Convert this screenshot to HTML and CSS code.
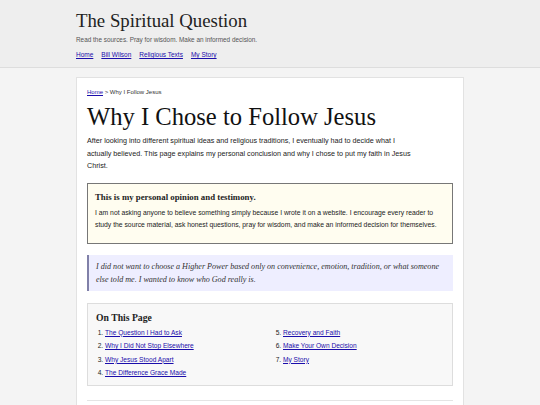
FILE: index.html
```html
<!DOCTYPE html>
<html lang="en">
<head>
    <meta charset="UTF-8">
    <meta name="viewport" content="width=device-width, initial-scale=1.0">
    <title>Why I Chose to Follow Jesus - The Spiritual Question</title>
    <link rel="stylesheet" href="styles.css">
</head>
<body>
    <header class="site-header">
        <div class="wrap">
            <div class="site-title">The Spiritual Question</div>
            <p class="tagline">Read the sources. Pray for wisdom. Make an informed decision.</p>
            <nav class="site-nav">
                <a href="#">Home</a>
                <a href="#">Bill Wilson</a>
                <a href="#">Religious Texts</a>
                <a href="#">My Story</a>
            </nav>
        </div>
    </header>

    <main class="wrap">
        <article class="card">
            <div class="breadcrumb"><a href="#">Home</a> &gt; Why I Follow Jesus</div>

            <h1>Why I Chose to Follow Jesus</h1>

            <p class="intro">After looking into different spiritual ideas and religious traditions, I eventually had to decide what I actually believed. This page explains my personal conclusion and why I chose to put my faith in Jesus Christ.</p>

            <div class="notice">
                <h2>This is my personal opinion and testimony.</h2>
                <p>I am not asking anyone to believe something simply because I wrote it on a website. I encourage every reader to study the source material, ask honest questions, pray for wisdom, and make an informed decision for themselves.</p>
            </div>

            <blockquote class="quote">
                I did not want to choose a Higher Power based only on convenience, emotion, tradition, or what someone else told me. I wanted to know who God really is.
            </blockquote>

            <div class="toc">
                <h2>On This Page</h2>
                <ol>
                    <li><a href="#">The Question I Had to Ask</a></li>
                    <li><a href="#">Why I Did Not Stop Elsewhere</a></li>
                    <li><a href="#">Why Jesus Stood Apart</a></li>
                    <li><a href="#">The Difference Grace Made</a></li>
                    <li><a href="#">Recovery and Faith</a></li>
                    <li><a href="#">Make Your Own Decision</a></li>
                    <li><a href="#">My Story</a></li>
                </ol>
            </div>

            <hr class="divider">
        </article>
    </main>
</body>
</html>
```

FILE: styles.css
```css
* {
    margin: 0;
    padding: 0;
    box-sizing: border-box;
}

body {
    background: #f4f4f4;
    color: #222;
    font-family: 'Liberation Sans', Arial, sans-serif;
    font-size: 7px;
}

a {
    color: #1a0dab;
}

.wrap {
    width: 388px;
    margin-left: 76px;
}

.site-header {
    background: #eeeeee;
    border-bottom: 1px solid #dddddd;
    height: 68px;
    padding-top: 9px;
}

.site-title {
    font-family: 'Liberation Serif', Georgia, serif;
    font-size: 18.8px;
    color: #222;
    line-height: 24px;
}

.tagline {
    color: #555;
    font-size: 6.4px;
    margin-top: 3px;
}

.site-nav {
    display: flex;
    gap: 8px;
    margin-top: 8px;
    font-size: 6.5px;
}

main.wrap {
    margin-top: 9px;
}

.card {
    background: #fff;
    border: 1px solid #e2e2e2;
    padding: 10px 10px 0;
    min-height: 340px;
}

.breadcrumb {
    font-size: 6px;
    color: #333;
    margin-top: 1px;
}

h1 {
    font-family: 'Liberation Serif', Georgia, serif;
    font-weight: normal;
    font-size: 24.6px;
    line-height: 30px;
    margin-top: 7px;
    color: #111;
}

.intro {
    font-size: 7.2px;
    line-height: 12.5px;
    max-width: 334px;
    margin-top: 3px;
}

.notice {
    background: #fffdf0;
    border: 1px solid #777;
    padding: 8px 8px 12px 7px;
    margin-top: 10px;
}

.notice h2 {
    font-family: 'Liberation Serif', Georgia, serif;
    font-size: 8.8px;
    font-weight: bold;
}

.notice p {
    font-size: 6.8px;
    line-height: 12px;
    margin-top: 5px;
}

.quote {
    background: #eeeeff;
    border-left: 2px solid #8080a8;
    padding: 5px 7px 5px 7px;
    margin-top: 11px;
    font-family: 'Liberation Serif', Georgia, serif;
    font-style: italic;
    font-size: 8.1px;
    line-height: 13px;
    color: #333;
}

.toc {
    background: #f8f8f8;
    border: 1px solid #dddddd;
    padding: 8px 8px 5px;
    margin-top: 12px;
}

.toc h2 {
    font-family: 'Liberation Serif', Georgia, serif;
    font-size: 9.7px;
    font-weight: bold;
}

.toc ol {
    columns: 2;
    column-gap: 17px;
    padding-left: 9px;
    margin-top: 3px;
    font-size: 6.6px;
}

.toc li {
    line-height: 13.5px;
}

.divider {
    border: none;
    border-top: 1px solid #e4e4e4;
    margin-top: 14px;
}
```
